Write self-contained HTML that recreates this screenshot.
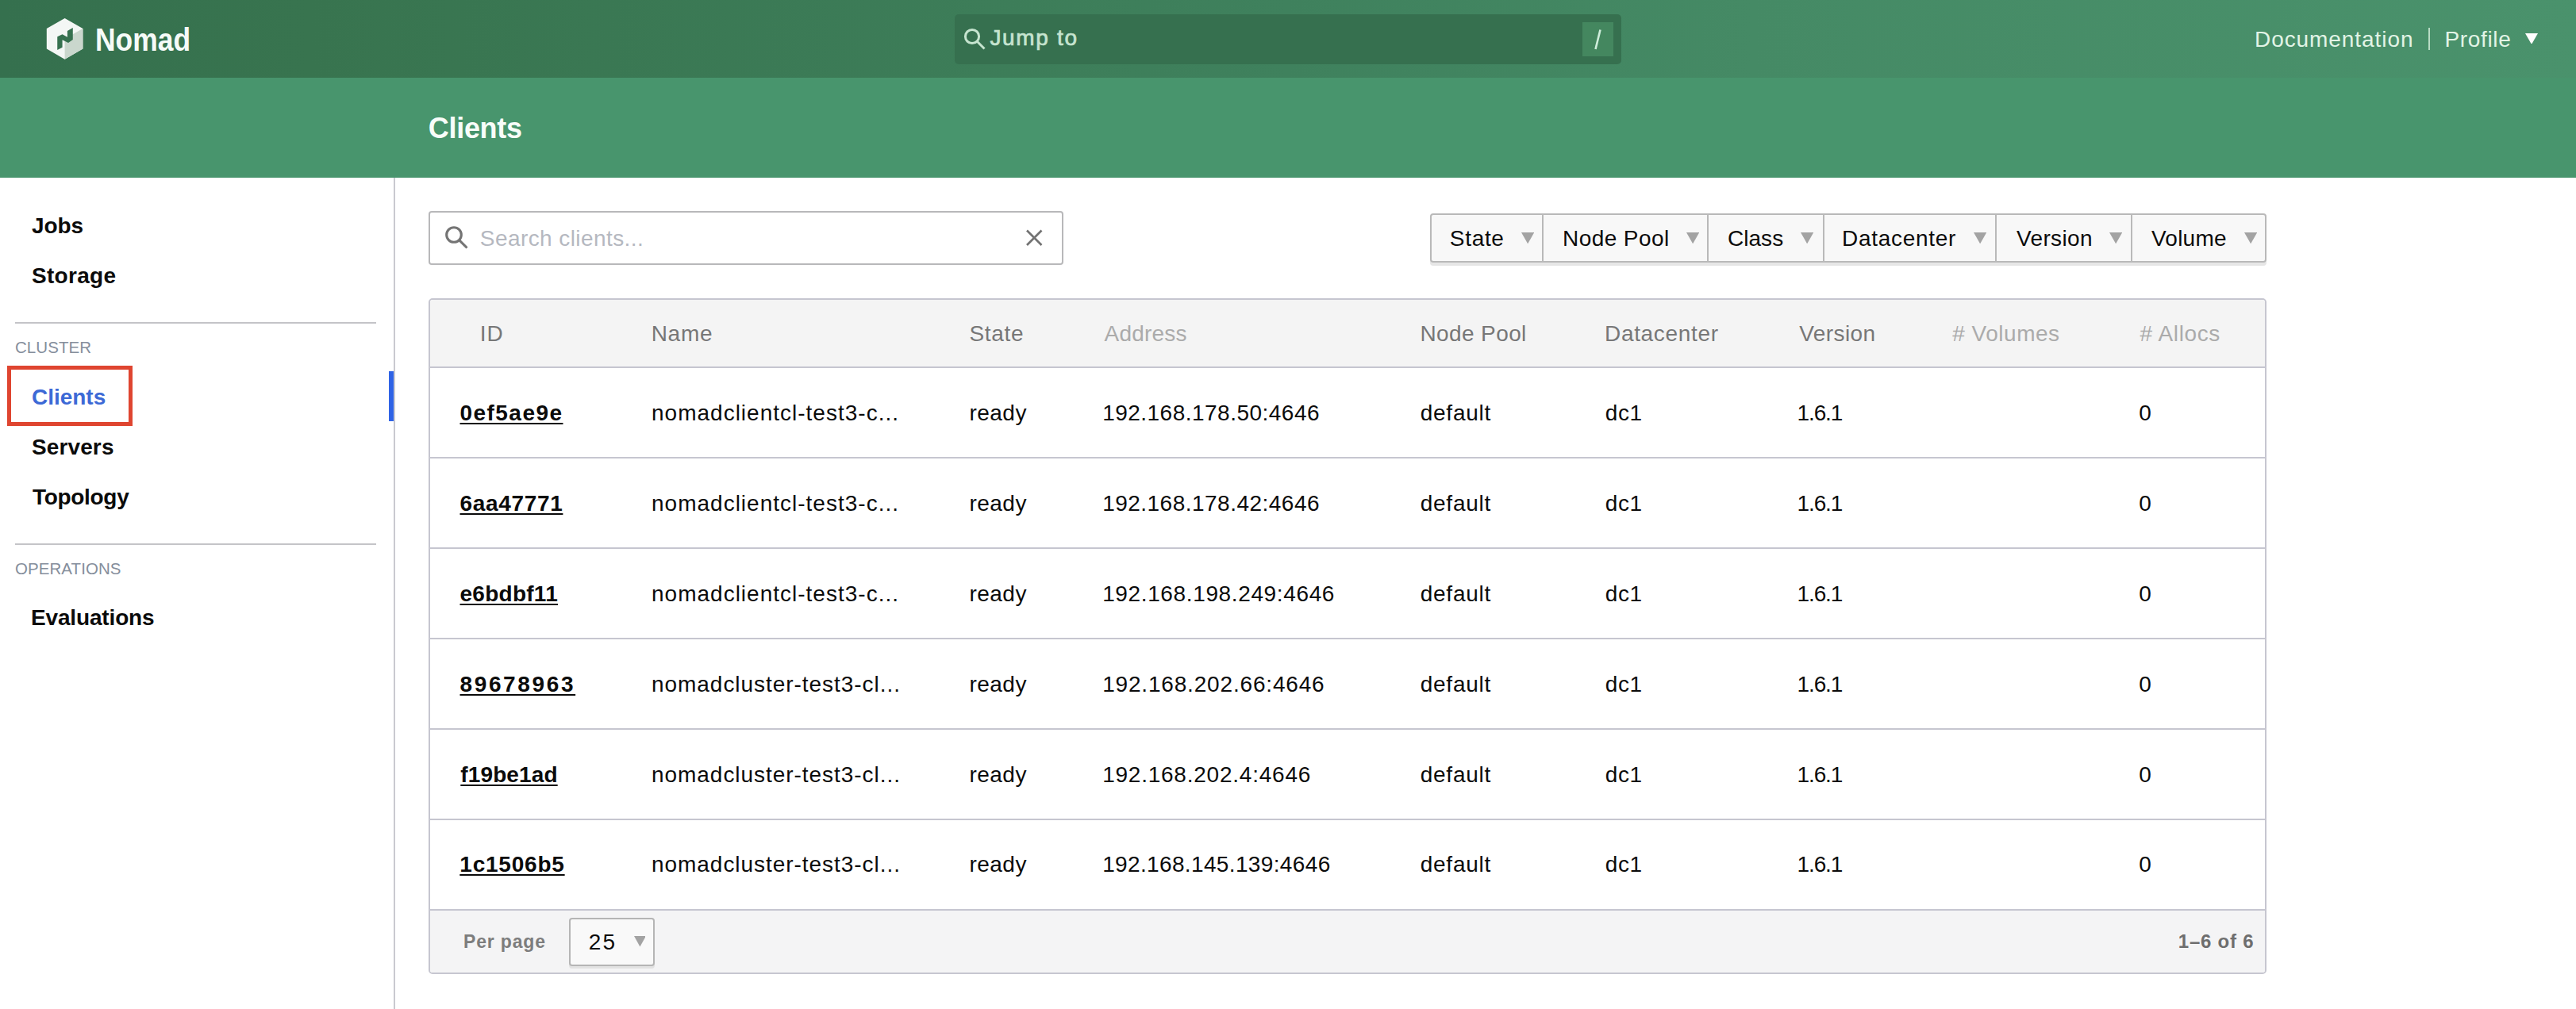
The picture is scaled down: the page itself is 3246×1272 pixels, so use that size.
<!DOCTYPE html>
<html><head><meta charset="utf-8"><title>Clients - Nomad</title>
<style>
html,body{margin:0;padding:0;}
body{width:3246px;height:1272px;overflow:hidden;position:relative;background:#fff;font-family:"Liberation Sans",sans-serif;}
.a{position:absolute;box-sizing:border-box;}
.t{position:absolute;white-space:nowrap;}
</style></head><body>
<div class="a" style="left:0px;top:0px;width:3246px;height:98px;background:linear-gradient(to right,#35704e 0%,#38744f 12%,#3f815d 50%,#458a65 68%,#4a926c 100%);"></div>
<svg class="a" style="left:0;top:0" width="120" height="98" viewBox="0 0 120 98">
<polygon points="81.6,22.9 104.4,36.1 104.4,61.6 81.6,74.8 58.8,61.6 58.8,36.1" fill="#f4f7f5"/>
<polygon points="81.6,49 104.4,36.1 104.4,61.6 81.6,74.8" fill="#cad7cd"/>
<polygon points="72.24,46.15 78.56,43.28 84.89,46.72 84.89,38.97 91.78,34.94 91.78,49.89 86.03,53.91 78.56,50.17 78.56,59.66 72.24,63.10" fill="#36714f"/>
</svg>
<div class="t" style="left:120.00px;top:30.14px;font-size:40px;line-height:40px;color:#f6fbf8;font-weight:700;transform:scaleX(0.886);transform-origin:0 0;">Nomad</div>
<div class="a" style="left:1203px;top:18px;width:840px;height:63px;background:#36704f;border-radius:5px;"></div>
<svg class="a" style="left:1212px;top:33px" width="32" height="32" viewBox="0 0 32 32"><circle cx="13" cy="13" r="8.6" fill="none" stroke="#c6e4cf" stroke-width="3"/><line x1="19.3" y1="19.3" x2="28.5" y2="28.5" stroke="#c6e4cf" stroke-width="3"/></svg>
<div class="t" style="left:1247.38px;top:33.70px;font-size:28px;line-height:28px;color:#c6e4cf;letter-spacing:1.687px;-webkit-text-stroke:0.7px #c6e4cf;">Jump to</div>
<div class="a" style="left:1994px;top:28px;width:39px;height:43.400000000000006px;background:#44875f;"></div>
<svg class="a" style="left:1994px;top:28px" width="39" height="44" viewBox="0 0 39 44"><line x1="22.5" y1="9.5" x2="16.5" y2="34" stroke="#cfeedb" stroke-width="2.6"/></svg>
<div class="t" style="left:2841.00px;top:35.80px;font-size:28px;line-height:28px;color:#e2f4e6;letter-spacing:0.932px;">Documentation</div>
<div class="a" style="left:3060px;top:34.6px;width:2px;height:28.6px;background:#b9dcc5;"></div>
<div class="t" style="left:3080.50px;top:35.80px;font-size:28px;line-height:28px;color:#e2f4e6;letter-spacing:0.660px;">Profile</div>
<svg class="a" style="left:3182px;top:41.5px" width="16" height="13.899999999999999" viewBox="0 0 16 13.899999999999999"><polygon points="0,0 16,0 8.0,13.899999999999999" fill="#ffffff"/></svg>
<div class="a" style="left:0px;top:98px;width:3246px;height:126px;background:#48956d;"></div>
<div class="t" style="left:539.82px;top:144.23px;font-size:36px;line-height:36px;color:#f8fdf9;font-weight:700;letter-spacing:-0.310px;">Clients</div>
<div class="a" style="left:496px;top:224px;width:2px;height:1048px;background:#c9c9d0;"></div>
<div class="t" style="left:40.00px;top:270.90px;font-size:28px;line-height:28px;color:#0b0b0b;font-weight:700;letter-spacing:-0.133px;">Jobs</div>
<div class="t" style="left:40.00px;top:333.90px;font-size:28px;line-height:28px;color:#0b0b0b;font-weight:700;letter-spacing:0.300px;">Storage</div>
<div class="a" style="left:19px;top:405.5px;width:455px;height:2.0px;background:#c4c4c8;"></div>
<div class="t" style="left:19.00px;top:428.25px;font-size:20.5px;line-height:20.5px;color:#858e9c;letter-spacing:0.050px;">CLUSTER</div>
<div class="t" style="left:40.00px;top:486.90px;font-size:28px;line-height:28px;color:#3c69d6;font-weight:700;letter-spacing:-0.020px;">Clients</div>
<div class="a" style="left:9px;top:461px;width:158px;height:76px;border:5px solid #df4530;"></div>
<div class="a" style="left:490px;top:468px;width:6px;height:63px;background:#2f63e6;"></div>
<div class="t" style="left:40.00px;top:549.90px;font-size:28px;line-height:28px;color:#0b0b0b;font-weight:700;letter-spacing:0.117px;">Servers</div>
<div class="t" style="left:41.00px;top:612.90px;font-size:28px;line-height:28px;color:#0b0b0b;font-weight:700;letter-spacing:-0.309px;">Topology</div>
<div class="a" style="left:19px;top:684.5px;width:455px;height:2.0px;background:#c4c4c8;"></div>
<div class="t" style="left:19.00px;top:707.25px;font-size:20.5px;line-height:20.5px;color:#858e9c;letter-spacing:0.064px;">OPERATIONS</div>
<div class="t" style="left:39.00px;top:764.90px;font-size:28px;line-height:28px;color:#0b0b0b;font-weight:700;letter-spacing:-0.156px;">Evaluations</div>
<div class="a" style="left:540px;top:266px;width:800px;height:68px;border:2px solid #b8b8ba;border-radius:4px;background:#fff;"></div>
<svg class="a" style="left:556px;top:280px" width="40" height="40" viewBox="0 0 40 40"><circle cx="16" cy="16" r="9.3" fill="none" stroke="#747474" stroke-width="3.1"/><line x1="22.8" y1="22.8" x2="32.5" y2="32.5" stroke="#747474" stroke-width="3.1"/></svg>
<div class="t" style="left:604.82px;top:286.90px;font-size:28px;line-height:28px;color:#b5b8c0;letter-spacing:0.425px;">Search clients...</div>
<svg class="a" style="left:1290px;top:287px" width="26" height="26" viewBox="0 0 26 26"><line x1="4" y1="3.5" x2="22.5" y2="22" stroke="#727272" stroke-width="2.6"/><line x1="22.5" y1="3.5" x2="4" y2="22" stroke="#727272" stroke-width="2.6"/></svg>
<div class="a" style="left:1802px;top:270px;width:1054px;height:65px;background:#e6e6e6;border-radius:4px;"></div>
<div class="a" style="left:1802px;top:269px;width:1054px;height:62px;background:#f8f8f8;border:2px solid #b9b9b9;border-radius:4px;"></div>
<div class="a" style="left:1942.5px;top:270px;width:2.0px;height:61px;background:#b9b9b9;"></div>
<div class="a" style="left:2150.5px;top:270px;width:2.0px;height:61px;background:#b9b9b9;"></div>
<div class="a" style="left:2296.5px;top:270px;width:2.0px;height:61px;background:#b9b9b9;"></div>
<div class="a" style="left:2513.5px;top:270px;width:2.0px;height:61px;background:#b9b9b9;"></div>
<div class="a" style="left:2684.5px;top:270px;width:2.0px;height:61px;background:#b9b9b9;"></div>
<div class="t" style="left:1826.84px;top:286.90px;font-size:28px;line-height:28px;color:#0b0b0b;letter-spacing:0.680px;">State</div>
<svg class="a" style="left:1916.7px;top:292.6px" width="16.299999999999955" height="14.299999999999955" viewBox="0 0 16.299999999999955 14.299999999999955"><polygon points="0,0 16.299999999999955,0 8.149999999999977,14.299999999999955" fill="#a3a3a3"/></svg>
<div class="t" style="left:1969.00px;top:286.90px;font-size:28px;line-height:28px;color:#0b0b0b;letter-spacing:0.430px;">Node Pool</div>
<svg class="a" style="left:2124.6px;top:292.6px" width="16.300000000000182" height="14.299999999999955" viewBox="0 0 16.300000000000182 14.299999999999955"><polygon points="0,0 16.300000000000182,0 8.150000000000091,14.299999999999955" fill="#a3a3a3"/></svg>
<div class="t" style="left:2177.00px;top:286.90px;font-size:28px;line-height:28px;color:#0b0b0b;letter-spacing:0.035px;">Class</div>
<svg class="a" style="left:2269px;top:292.6px" width="16.300000000000182" height="14.299999999999955" viewBox="0 0 16.300000000000182 14.299999999999955"><polygon points="0,0 16.300000000000182,0 8.150000000000091,14.299999999999955" fill="#a3a3a3"/></svg>
<div class="t" style="left:2321.02px;top:286.90px;font-size:28px;line-height:28px;color:#0b0b0b;letter-spacing:0.707px;">Datacenter</div>
<svg class="a" style="left:2487px;top:292.6px" width="16.300000000000182" height="14.299999999999955" viewBox="0 0 16.300000000000182 14.299999999999955"><polygon points="0,0 16.300000000000182,0 8.150000000000091,14.299999999999955" fill="#a3a3a3"/></svg>
<div class="t" style="left:2541.00px;top:286.90px;font-size:28px;line-height:28px;color:#0b0b0b;letter-spacing:0.350px;">Version</div>
<svg class="a" style="left:2658px;top:292.6px" width="16.300000000000182" height="14.299999999999955" viewBox="0 0 16.300000000000182 14.299999999999955"><polygon points="0,0 16.300000000000182,0 8.150000000000091,14.299999999999955" fill="#a3a3a3"/></svg>
<div class="t" style="left:2711.00px;top:286.90px;font-size:28px;line-height:28px;color:#0b0b0b;letter-spacing:0.220px;">Volume</div>
<svg class="a" style="left:2828px;top:292.6px" width="16.300000000000182" height="14.299999999999955" viewBox="0 0 16.300000000000182 14.299999999999955"><polygon points="0,0 16.300000000000182,0 8.150000000000091,14.299999999999955" fill="#a3a3a3"/></svg>
<div class="a" style="left:540px;top:376px;width:2316px;height:852px;border:2px solid #c6c6d0;border-radius:5px;background:#fff;"></div>
<div class="a" style="left:542px;top:378px;width:2312px;height:84px;background:#f4f4f4;border-radius:3px 3px 0 0;"></div>
<div class="a" style="left:542px;top:462px;width:2312px;height:2px;background:#c6c6d0;"></div>
<div class="t" style="left:604.84px;top:407.10px;font-size:28px;line-height:28px;color:#777777;letter-spacing:1.000px;">ID</div>
<div class="t" style="left:820.66px;top:407.10px;font-size:28px;line-height:28px;color:#777777;letter-spacing:0.727px;">Name</div>
<div class="t" style="left:1221.50px;top:407.10px;font-size:28px;line-height:28px;color:#777777;letter-spacing:0.650px;">State</div>
<div class="t" style="left:1391.48px;top:407.10px;font-size:28px;line-height:28px;color:#ababab;letter-spacing:0.237px;">Address</div>
<div class="t" style="left:1789.48px;top:407.10px;font-size:28px;line-height:28px;color:#777777;letter-spacing:0.387px;">Node Pool</div>
<div class="t" style="left:2022.00px;top:407.10px;font-size:28px;line-height:28px;color:#777777;letter-spacing:0.667px;">Datacenter</div>
<div class="t" style="left:2267.18px;top:407.10px;font-size:28px;line-height:28px;color:#777777;letter-spacing:0.433px;">Version</div>
<div class="t" style="left:2460.16px;top:407.10px;font-size:28px;line-height:28px;color:#ababab;letter-spacing:0.522px;"># Volumes</div>
<div class="t" style="left:2696.48px;top:407.10px;font-size:28px;line-height:28px;color:#ababab;letter-spacing:0.629px;"># Allocs</div>
<div class="t" style="left:579.52px;top:506.90px;font-size:28px;line-height:28px;color:#0b0b0b;font-weight:700;letter-spacing:1.454px;text-decoration:underline;text-decoration-thickness:2px;text-underline-offset:3px;">0ef5ae9e</div>
<div class="t" style="left:821.00px;top:506.90px;font-size:28px;line-height:28px;color:#0b0b0b;letter-spacing:1.004px;">nomadclientcl-test3-c...</div>
<div class="t" style="left:1221.48px;top:506.90px;font-size:28px;line-height:28px;color:#0b0b0b;letter-spacing:0.475px;">ready</div>
<div class="t" style="left:1389.14px;top:506.90px;font-size:28px;line-height:28px;color:#0b0b0b;letter-spacing:0.483px;">192.168.178.50:4646</div>
<div class="t" style="left:1789.64px;top:506.90px;font-size:28px;line-height:28px;color:#0b0b0b;letter-spacing:0.783px;">default</div>
<div class="t" style="left:2022.66px;top:506.90px;font-size:28px;line-height:28px;color:#0b0b0b;letter-spacing:0.650px;">dc1</div>
<div class="t" style="left:2264.52px;top:506.90px;font-size:28px;line-height:28px;color:#0b0b0b;letter-spacing:-1.105px;">1.6.1</div>
<div class="t" style="left:2695.16px;top:506.90px;font-size:28px;line-height:28px;color:#0b0b0b;">0</div>
<div class="a" style="left:542px;top:576px;width:2312px;height:2px;background:#c6c6d0;"></div>
<div class="t" style="left:579.52px;top:620.80px;font-size:28px;line-height:28px;color:#0b0b0b;font-weight:700;letter-spacing:0.663px;text-decoration:underline;text-decoration-thickness:2px;text-underline-offset:3px;">6aa47771</div>
<div class="t" style="left:821.00px;top:620.80px;font-size:28px;line-height:28px;color:#0b0b0b;letter-spacing:1.004px;">nomadclientcl-test3-c...</div>
<div class="t" style="left:1221.48px;top:620.80px;font-size:28px;line-height:28px;color:#0b0b0b;letter-spacing:0.475px;">ready</div>
<div class="t" style="left:1389.14px;top:620.80px;font-size:28px;line-height:28px;color:#0b0b0b;letter-spacing:0.483px;">192.168.178.42:4646</div>
<div class="t" style="left:1789.64px;top:620.80px;font-size:28px;line-height:28px;color:#0b0b0b;letter-spacing:0.783px;">default</div>
<div class="t" style="left:2022.66px;top:620.80px;font-size:28px;line-height:28px;color:#0b0b0b;letter-spacing:0.650px;">dc1</div>
<div class="t" style="left:2264.52px;top:620.80px;font-size:28px;line-height:28px;color:#0b0b0b;letter-spacing:-1.105px;">1.6.1</div>
<div class="t" style="left:2695.16px;top:620.80px;font-size:28px;line-height:28px;color:#0b0b0b;">0</div>
<div class="a" style="left:542px;top:690px;width:2312px;height:2px;background:#c6c6d0;"></div>
<div class="t" style="left:579.52px;top:734.70px;font-size:28px;line-height:28px;color:#0b0b0b;font-weight:700;letter-spacing:0.263px;text-decoration:underline;text-decoration-thickness:2px;text-underline-offset:3px;">e6bdbf11</div>
<div class="t" style="left:821.00px;top:734.70px;font-size:28px;line-height:28px;color:#0b0b0b;letter-spacing:1.004px;">nomadclientcl-test3-c...</div>
<div class="t" style="left:1221.48px;top:734.70px;font-size:28px;line-height:28px;color:#0b0b0b;letter-spacing:0.475px;">ready</div>
<div class="t" style="left:1389.14px;top:734.70px;font-size:28px;line-height:28px;color:#0b0b0b;letter-spacing:0.632px;">192.168.198.249:4646</div>
<div class="t" style="left:1789.64px;top:734.70px;font-size:28px;line-height:28px;color:#0b0b0b;letter-spacing:0.783px;">default</div>
<div class="t" style="left:2022.66px;top:734.70px;font-size:28px;line-height:28px;color:#0b0b0b;letter-spacing:0.650px;">dc1</div>
<div class="t" style="left:2264.52px;top:734.70px;font-size:28px;line-height:28px;color:#0b0b0b;letter-spacing:-1.105px;">1.6.1</div>
<div class="t" style="left:2695.16px;top:734.70px;font-size:28px;line-height:28px;color:#0b0b0b;">0</div>
<div class="a" style="left:542px;top:804px;width:2312px;height:2px;background:#c6c6d0;"></div>
<div class="t" style="left:579.52px;top:848.60px;font-size:28px;line-height:28px;color:#0b0b0b;font-weight:700;letter-spacing:2.629px;text-decoration:underline;text-decoration-thickness:2px;text-underline-offset:3px;">89678963</div>
<div class="t" style="left:821.00px;top:848.60px;font-size:28px;line-height:28px;color:#0b0b0b;letter-spacing:0.957px;">nomadcluster-test3-cl...</div>
<div class="t" style="left:1221.48px;top:848.60px;font-size:28px;line-height:28px;color:#0b0b0b;letter-spacing:0.475px;">ready</div>
<div class="t" style="left:1389.14px;top:848.60px;font-size:28px;line-height:28px;color:#0b0b0b;letter-spacing:0.823px;">192.168.202.66:4646</div>
<div class="t" style="left:1789.64px;top:848.60px;font-size:28px;line-height:28px;color:#0b0b0b;letter-spacing:0.783px;">default</div>
<div class="t" style="left:2022.66px;top:848.60px;font-size:28px;line-height:28px;color:#0b0b0b;letter-spacing:0.650px;">dc1</div>
<div class="t" style="left:2264.52px;top:848.60px;font-size:28px;line-height:28px;color:#0b0b0b;letter-spacing:-1.105px;">1.6.1</div>
<div class="t" style="left:2695.16px;top:848.60px;font-size:28px;line-height:28px;color:#0b0b0b;">0</div>
<div class="a" style="left:542px;top:918px;width:2312px;height:2px;background:#c6c6d0;"></div>
<div class="t" style="left:580.32px;top:962.50px;font-size:28px;line-height:28px;color:#0b0b0b;font-weight:700;letter-spacing:0.120px;text-decoration:underline;text-decoration-thickness:2px;text-underline-offset:3px;">f19be1ad</div>
<div class="t" style="left:821.00px;top:962.50px;font-size:28px;line-height:28px;color:#0b0b0b;letter-spacing:0.957px;">nomadcluster-test3-cl...</div>
<div class="t" style="left:1221.48px;top:962.50px;font-size:28px;line-height:28px;color:#0b0b0b;letter-spacing:0.475px;">ready</div>
<div class="t" style="left:1389.14px;top:962.50px;font-size:28px;line-height:28px;color:#0b0b0b;letter-spacing:0.767px;">192.168.202.4:4646</div>
<div class="t" style="left:1789.64px;top:962.50px;font-size:28px;line-height:28px;color:#0b0b0b;letter-spacing:0.783px;">default</div>
<div class="t" style="left:2022.66px;top:962.50px;font-size:28px;line-height:28px;color:#0b0b0b;letter-spacing:0.650px;">dc1</div>
<div class="t" style="left:2264.52px;top:962.50px;font-size:28px;line-height:28px;color:#0b0b0b;letter-spacing:-1.105px;">1.6.1</div>
<div class="t" style="left:2695.16px;top:962.50px;font-size:28px;line-height:28px;color:#0b0b0b;">0</div>
<div class="a" style="left:542px;top:1032px;width:2312px;height:2px;background:#c6c6d0;"></div>
<div class="t" style="left:579.32px;top:1076.40px;font-size:28px;line-height:28px;color:#0b0b0b;font-weight:700;letter-spacing:0.774px;text-decoration:underline;text-decoration-thickness:2px;text-underline-offset:3px;">1c1506b5</div>
<div class="t" style="left:821.00px;top:1076.40px;font-size:28px;line-height:28px;color:#0b0b0b;letter-spacing:0.957px;">nomadcluster-test3-cl...</div>
<div class="t" style="left:1221.48px;top:1076.40px;font-size:28px;line-height:28px;color:#0b0b0b;letter-spacing:0.475px;">ready</div>
<div class="t" style="left:1389.14px;top:1076.40px;font-size:28px;line-height:28px;color:#0b0b0b;letter-spacing:0.360px;">192.168.145.139:4646</div>
<div class="t" style="left:1789.64px;top:1076.40px;font-size:28px;line-height:28px;color:#0b0b0b;letter-spacing:0.783px;">default</div>
<div class="t" style="left:2022.66px;top:1076.40px;font-size:28px;line-height:28px;color:#0b0b0b;letter-spacing:0.650px;">dc1</div>
<div class="t" style="left:2264.52px;top:1076.40px;font-size:28px;line-height:28px;color:#0b0b0b;letter-spacing:-1.105px;">1.6.1</div>
<div class="t" style="left:2695.16px;top:1076.40px;font-size:28px;line-height:28px;color:#0b0b0b;">0</div>
<div class="a" style="left:542px;top:1146px;width:2312px;height:2px;background:#c6c6d0;"></div>
<div class="a" style="left:542px;top:1148px;width:2312px;height:78px;background:#f4f4f5;border-radius:0 0 3px 3px;"></div>
<div class="t" style="left:584.00px;top:1176.13px;font-size:23px;line-height:23px;color:#7d7d7d;font-weight:700;letter-spacing:0.829px;">Per page</div>
<div class="a" style="left:717px;top:1158px;width:108px;height:63px;background:#e2e2e2;border-radius:4px;"></div>
<div class="a" style="left:717px;top:1157px;width:108px;height:61px;background:#f9f9f9;border:2px solid #b5b5b5;border-radius:4px;"></div>
<div class="t" style="left:741.84px;top:1173.50px;font-size:28px;line-height:28px;color:#0b0b0b;letter-spacing:2.160px;">25</div>
<svg class="a" style="left:798.6px;top:1180px" width="14.899999999999977" height="13.599999999999909" viewBox="0 0 14.899999999999977 13.599999999999909"><polygon points="0,0 14.899999999999977,0 7.449999999999989,13.599999999999909" fill="#a3a3a3"/></svg>
<div class="t" style="left:2744.82px;top:1175.28px;font-size:24px;line-height:24px;color:#6e6e6e;font-weight:700;letter-spacing:0.766px;">1–6 of 6</div>
</body></html>
